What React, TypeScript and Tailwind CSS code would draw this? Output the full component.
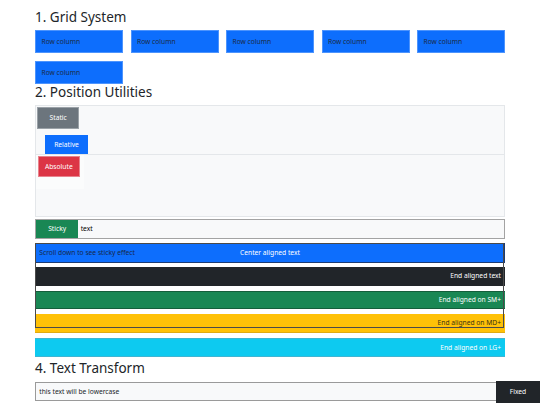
export default function App() {
  const cols = Array.from({ length: 6 });
  return (
    <div className="w-[540px] h-[405px] bg-white overflow-hidden relative font-['Noto_Sans',sans-serif] text-[#212529]">
      <div className="mx-auto w-[470px] pt-[9px]">
        <h2 className="text-[13.5px] leading-[16px] font-normal">1. Grid System</h2>
        <div className="mt-[5px] grid grid-cols-5 gap-x-[7.5px] gap-y-[7.7px]">
          {cols.map((_, i) => (
            <div
              key={i}
              className="h-[23.3px] bg-[#0d6efd] border border-[#4d94fd] flex items-center pl-[5.5px] text-[6.7px] text-[#1b2a44]"
            >
              Row column
            </div>
          ))}
        </div>

        <h2 className="text-[13.5px] leading-[16px] font-normal">2. Position Utilities</h2>
        <div className="mt-[4.7px] h-[50px] border border-[#e4e7ea] bg-[#f8f9fa] overflow-hidden">
          <div className="ml-[1px] mt-[1.3px] w-[42.3px] h-[21.4px] bg-[#6c757d] border border-[#9aa1a7] flex items-center justify-center text-white text-[6.7px]">
            Static
          </div>
          <div className="ml-[9.3px] mt-[6px] w-[42.4px] h-[21.4px] bg-[#0d6efd] flex items-center justify-center text-white text-[6.7px]">
            Relative
          </div>
        </div>
        <div className="h-[62px] border-x border-b border-[#e4e7ea] bg-[#f8f9fa]">
          <div className="w-[48px] h-[34px] bg-[#fbfcfc] pt-[1px] pl-[1.7px]">
            <div className="w-[42.3px] h-[21.3px] bg-[#dc3545] border border-[#e8838d] flex items-center justify-center text-white text-[6.7px]">
              Absolute
            </div>
          </div>
        </div>

        <div className="mt-[2.3px] h-[19.4px] border border-[#a3a3a3] bg-[#f8f9fa] flex items-stretch">
          <div className="w-[42.3px] bg-[#198754] flex items-center justify-center text-white text-[6.7px]">
            Sticky
          </div>
          <div className="ml-[2.4px] flex items-center text-[6.7px] text-black">text</div>
        </div>

        <div className="mt-[4.6px] relative">
          <div className="h-[19.4px] bg-[#0d6efd] border border-[#1c3b73] grid grid-cols-[1fr_auto_1fr] items-center text-[6.7px]">
            <span className="pl-[3.3px] text-[#16284a]">Scroll down to see sticky effect</span>
            <span className="text-white">Center aligned text</span>
            <span />
          </div>
          <div className="mt-[4px] h-[19.3px] bg-[#212529] flex items-center justify-end pr-[4px] text-white text-[6.7px]">
            End aligned text
          </div>
          <div className="mt-[4.7px] h-[18.6px] bg-[#198754] border-y border-[#145e3b] flex items-center justify-end pr-[4px] text-white text-[6.7px]">
            End aligned on SM+
          </div>
          <div className="mt-[4.7px] h-[19.3px] bg-[#ffc107] border-b border-[#e0aa10] flex items-center justify-end pr-[4px] text-[#3a3112] text-[6.7px]">
            End aligned on MD+
          </div>
          <div className="pointer-events-none absolute left-0 right-[0.7px] top-0 h-[85px] border border-[#4a4a4a]" />
          <div className="mt-[4.7px] h-[19.3px] bg-[#0dcaf0] border-y border-[#3fb5d2] flex items-center justify-end pr-[4px] text-white text-[6.7px]">
            End aligned on LG+
          </div>
        </div>

        <h2 className="mt-[3px] text-[13.5px] leading-[16px] font-normal">4. Text Transform</h2>
        <div className="mt-[6.3px] h-[19px] border border-[#9a9a9a] bg-[#f8f9fa] flex items-center pl-[3.3px] text-[6.7px] text-[#212529]">
          this text will be lowercase
        </div>
      </div>
      <div className="absolute right-0 bottom-[2.3px] w-[44px] h-[21.7px] bg-[#212529] flex items-center justify-center text-white text-[6.7px]">
        Fixed
      </div>
    </div>
  );
}
